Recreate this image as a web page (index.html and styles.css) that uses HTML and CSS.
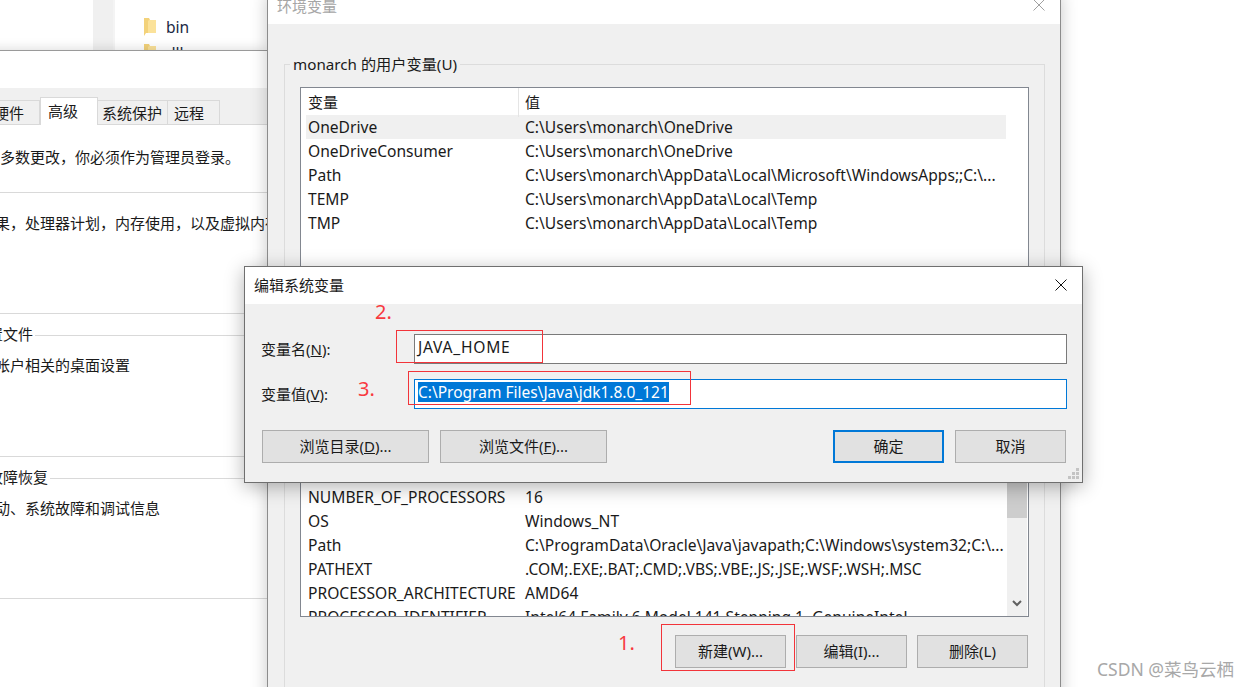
FILE: index.html
```html
<!DOCTYPE html>
<html lang="zh-CN">
<head>
    <meta charset="UTF-8">
    <title>编辑系统变量</title>
    <link rel="stylesheet" href="styles.css">
</head>
<body>
<div class="desktop">

    <!-- explorer behind everything -->
    <div class="window explorer">
        <div class="nav-pane"></div>
        <div class="nav-band"></div>
        <div class="file-list">
            <div class="file-row">
                <svg class="folder" width="12" height="18" viewBox="0 0 12 18"><path d="M0 0h5l1 2h6v13H2l-2 3z" fill="#f3d27a"/><path d="M4 3l1-1h7v13H4z" fill="#fbe29a"/></svg>
                <span>bin</span>
            </div>
            <div class="file-row">
                <svg class="folder" width="12" height="18" viewBox="0 0 12 18"><path d="M0 0h5l1 2h6v13H2l-2 3z" fill="#f3d27a"/><path d="M4 3l1-1h7v13H4z" fill="#fbe29a"/></svg>
                <span>dll</span>
            </div>
        </div>
    </div>

    <!-- system properties -->
    <div class="window sysprops">
        <div class="sys-head"></div>
        <div class="tabs">
            <div class="tab tab-hw">硬件</div>
            <div class="tab tab-active">高级</div>
            <div class="tab tab-protect">系统保护</div>
            <div class="tab tab-remote">远程</div>
        </div>
        <div class="sys-note">要进行大多数更改，你必须作为管理员登录。</div>
        <div class="sys-section sec-perf">
            <p>视觉效果，处理器计划，内存使用，以及虚拟内存</p>
        </div>
        <div class="sys-section sec-group">
            <div class="sec-label"><span>用户配置文件</span><i></i></div>
            <p>与登录帐户相关的桌面设置</p>
        </div>
        <div class="sys-section sec-group sec-last">
            <div class="sec-label"><span>启动和故障恢复</span><i></i></div>
            <p>系统启动、系统故障和调试信息</p>
        </div>
    </div>

    <!-- environment variables -->
    <div class="window envvars">
        <div class="title-bar env-title">
            <span>环境变量</span>
            <svg width="12" height="12" viewBox="0 0 12 12"><path d="M.5.5l11 11M11.5.5l-11 11" stroke="#a0a0a0" fill="none"/></svg>
        </div>
        <div class="env-body">
            <div class="group group-user">
                <div class="group-label">monarch 的用户变量(U)</div>
                <div class="list list-user">
                    <div class="row row-head"><span class="col-name">变量</span><span>值</span></div>
                    <div class="row row-selected"><span>OneDrive</span><span>C:\Users\monarch\OneDrive</span></div>
                    <div class="row"><span>OneDriveConsumer</span><span>C:\Users\monarch\OneDrive</span></div>
                    <div class="row"><span>Path</span><span>C:\Users\monarch\AppData\Local\Microsoft\WindowsApps;;C:\...</span></div>
                    <div class="row"><span>TEMP</span><span>C:\Users\monarch\AppData\Local\Temp</span></div>
                    <div class="row"><span>TMP</span><span>C:\Users\monarch\AppData\Local\Temp</span></div>
                </div>
            </div>
            <div class="group group-system">
                <div class="list list-system">
                    <div class="rows">
                        <div class="row"><span>NUMBER_OF_PROCESSORS</span><span>16</span></div>
                        <div class="row"><span>OS</span><span>Windows_NT</span></div>
                        <div class="row"><span>Path</span><span>C:\ProgramData\Oracle\Java\javapath;C:\Windows\system32;C:\...</span></div>
                        <div class="row"><span>PATHEXT</span><span>.COM;.EXE;.BAT;.CMD;.VBS;.VBE;.JS;.JSE;.WSF;.WSH;.MSC</span></div>
                        <div class="row"><span>PROCESSOR_ARCHITECTURE</span><span>AMD64</span></div>
                        <div class="row"><span>PROCESSOR_IDENTIFIER</span><span>Intel64 Family 6 Model 141 Stepping 1, GenuineIntel</span></div>
                    </div>
                    <div class="scrollbar">
                        <div class="thumb"></div>
                        <svg class="scroll-down" width="10" height="7" viewBox="0 0 10 7"><path d="M1 1l4 4 4-4" stroke="#606060" stroke-width="2" fill="none"/></svg>
                    </div>
                </div>
                <div class="list-actions">
                    <button class="btn">新建(W)...</button>
                    <button class="btn">编辑(I)...</button>
                    <button class="btn">删除(L)</button>
                </div>
            </div>
        </div>
    </div>

    <!-- edit dialog -->
    <div class="window dialog">
        <div class="title-bar dialog-title">
            <span>编辑系统变量</span>
            <svg width="12" height="12" viewBox="0 0 12 12"><path d="M.5.5l11 11M11.5.5l-11 11" stroke="#111" fill="none"/></svg>
        </div>
        <div class="dialog-body">
            <div class="field">
                <label>变量名(<u>N</u>):</label>
                <div class="input input-name">JAVA_HOME</div>
            </div>
            <div class="field">
                <label>变量值(<u>V</u>):</label>
                <div class="input input-focus"><span class="selection">C:\Program Files\Java\jdk1.8.0_121</span></div>
            </div>
            <div class="dialog-actions">
                <button class="btn btn-browse">浏览目录(<u>D</u>)...</button>
                <button class="btn btn-browse">浏览文件(<u>F</u>)...</button>
                <span class="spacer"></span>
                <button class="btn btn-default">确定</button>
                <button class="btn">取消</button>
            </div>
        </div>
        <svg class="grip" width="12" height="12" viewBox="0 0 12 12" fill="#c4c4c4"><path d="M8 0h3v3H8zM4 4h3v3H4zM8 4h3v3H8zM0 8h3v3H0zM4 8h3v3H4zM8 8h3v3H8z"/></svg>
    </div>

    <!-- red marks drawn on the screenshot -->
    <div class="mark mark-name"></div>
    <div class="mark mark-value"></div>
    <div class="mark mark-new"></div>
    <span class="step step-1">1.</span>
    <span class="step step-2">2.</span>
    <span class="step step-3">3.</span>

    <div class="watermark">CSDN @菜鸟云栖</div>
</div>
</body>
</html>
```

FILE: styles.css
```css
html, body {
    margin: 0;
    padding: 0;
    height: 100%;
    overflow: hidden;
    background: #fff;
    font-family: "Noto Sans", "Noto Sans CJK SC", sans-serif;
    font-size: 15px;
    color: #1a1a1a;
}

.desktop {
    position: relative;
    width: 1248px;
    height: 687px;
    overflow: hidden;
}

.window { position: absolute; box-sizing: border-box; }

/* explorer */
.explorer {
    left: 0;
    top: 0;
    width: 268px;
    height: 51px;
    display: flex;
    background: #fff;
}
.nav-pane { width: 93px; }
.nav-band { width: 20px; background: #f0f0f0; border-right: 2px solid #f4f4f4; margin-right: 29px; }
.file-list { padding-top: 14px; color: #1b2a44; font-size: 15.6px; }
.file-row { height: 26px; display: flex; align-items: center; gap: 10px; line-height: 26px; }

/* system properties */
.sysprops {
    left: -72px;
    top: 50px;
    width: 340px;
    height: 660px;
    background: #fff;
    border-top: 1px solid #9a9a9a;
    box-shadow: 0 0 12px rgba(0, 0, 0, 0.16);
}
.sys-head { height: 37px; }
.tabs {
    height: 37px;
    box-sizing: border-box;
    display: flex;
    align-items: flex-end;
    background: #f0f0f0;
    border-bottom: 1px solid #d9d9d9;
}
.tab {
    box-sizing: border-box;
    height: 25px;
    line-height: 25px;
    border: 1px solid #d9d9d9;
    border-bottom: 0;
    border-left: 0;
    margin-bottom: -1px;
    white-space: nowrap;
}
.tab-hw { width: 112px; padding-left: 66px; }
.tab-active {
    width: 58px;
    height: 28px;
    line-height: 26px;
    background: #fff;
    border-left: 1px solid #d9d9d9;
    padding-left: 7px;
}
.tab-protect { width: 70px; padding-left: 4px; }
.tab-remote { width: 52px; padding-left: 6px; }

.sys-note {
    height: 68px;
    box-sizing: border-box;
    padding: 21px 0 0 12px;
    line-height: 22px;
    border-bottom: 1px solid #d9d9d9;
    white-space: nowrap;
}
.sys-section { box-sizing: border-box; border-bottom: 1px solid #d9d9d9; white-space: nowrap; }
.sys-section p { margin: 0; padding-left: 22px; line-height: 22px; }
.sec-perf { height: 121px; padding-top: 19px; }
.sec-group { height: 143px; padding: 10px 0 0 15px; }
.sec-group p { padding-left: 7px; margin-top: 8px; }
.sec-last { height: 142px; }
.sec-label { display: flex; height: 22px; line-height: 20px; }
.sec-label i { flex: 1; height: 1px; background: #d9d9d9; margin: 11px 0 0 2px; }

/* environment variables */
.envvars {
    left: 267px;
    top: -6px;
    width: 794px;
    height: 720px;
    background: #f0f0f0;
    border: 1px solid #8c8c8c;
    box-shadow: 0 0 16px rgba(0, 0, 0, 0.22);
}
.title-bar {
    box-sizing: border-box;
    display: flex;
    align-items: center;
    justify-content: space-between;
    background: #fff;
}
.env-title { height: 29px; padding: 0 15px 9px 9px; color: #a6a6a6; }
.env-body { padding: 40px 15px 0 16px; }

.group { position: relative; border: 1px solid #dcdcdc; padding: 0 15px; }
.group-user { height: 268px; padding-top: 22px; box-sizing: border-box; }
.group-system { margin-top: 18px; height: 400px; padding-top: 22px; box-sizing: border-box; }
.group-label {
    position: absolute;
    left: 5px;
    top: -12px;
    padding: 0 3px;
    line-height: 22px;
    font-size: 15.2px;
    background: #f0f0f0;
}

.list { box-sizing: border-box; border: 1px solid #828790; background: #fff; overflow: hidden; }
.list-user { height: 230px; }
.list-system { height: 244px; display: flex; justify-content: space-between; }
.rows { padding-top: 111px; }

.row {
    display: grid;
    grid-template-columns: 211px 1fr;
    column-gap: 6px;
    width: 698px;
    height: 24px;
    line-height: 24px;
    margin-left: 5px;
    padding-left: 2px;
    font-size: 15.6px;
    white-space: nowrap;
}
.row-head { height: 27px; line-height: 29px; font-size: 15px; }
.col-name { border-right: 1px solid #e5e5e5; }
.row-selected { background: #f0f0f0; }

.scrollbar {
    position: relative;
    width: 20px;
    margin-right: 1px;
    background: #f0f0f0;
}
.thumb { height: 144px; background: #cdcdcd; }
.scroll-down { position: absolute; left: 5px; bottom: 9px; }

.list-actions { display: flex; justify-content: flex-end; gap: 10px; margin: 18px 1px 0 0; }

.btn {
    box-sizing: border-box;
    width: 111px;
    height: 33px;
    padding: 0 0 2px;
    background: #e1e1e1;
    border: 1px solid #adadad;
    font: inherit;
    color: #1a1a1a;
}

/* edit dialog */
.dialog {
    left: 244px;
    top: 266px;
    width: 839px;
    height: 217px;
    background: #f0f0f0;
    border: 1px solid #6f6f6f;
    box-shadow: 0 4px 18px rgba(0, 0, 0, 0.3);
}
.dialog-title { height: 37px; padding: 0 15px 2px 9px; }
.dialog-body { padding: 30px 15px 0 16px; }
.field { display: flex; align-items: center; height: 30px; margin-bottom: 15px; }
.field label { width: 153px; padding-bottom: 2px; }
.input {
    flex: 1;
    box-sizing: border-box;
    height: 30px;
    line-height: 24px;
    padding-left: 3px;
    background: #fff;
    border: 1px solid #7a7a7a;
    font-size: 15.6px;
    white-space: nowrap;
}
.input-name { letter-spacing: 0.75px; }
.input-focus { border-color: #0078d7; padding-top: 2px; line-height: 20px; font-size: 15.5px; }
.selection { display: inline-block; height: 20px; line-height: 21px; background: #0078d7; color: #fff; }

.dialog-actions { display: flex; gap: 11px; margin: 21px 1px 0 1px; }
.spacer { flex: 1; }
.btn-browse { width: 167px; }
.btn-default { border: 2px solid #0078d7; }
.grip { position: absolute; right: 2px; bottom: 2px; }

/* annotations */
.mark { position: absolute; box-sizing: border-box; border: 1px solid #f2343a; }
.mark-name { left: 396px; top: 330px; width: 147px; height: 33px; }
.mark-value { left: 408px; top: 371px; width: 283px; height: 34px; }
.mark-new { left: 661px; top: 624px; width: 134px; height: 47px; }

.step { position: absolute; color: #f8393f; font-size: 20px; line-height: 24px; }
.step-1 { left: 618px; top: 631px; }
.step-2 { left: 375px; top: 300px; }
.step-3 { left: 358px; top: 377px; }

.watermark {
    position: absolute;
    left: 1097px;
    top: 657px;
    font-size: 17.5px;
    line-height: 24px;
    color: #a8a8a8;
    white-space: nowrap;
}
```
